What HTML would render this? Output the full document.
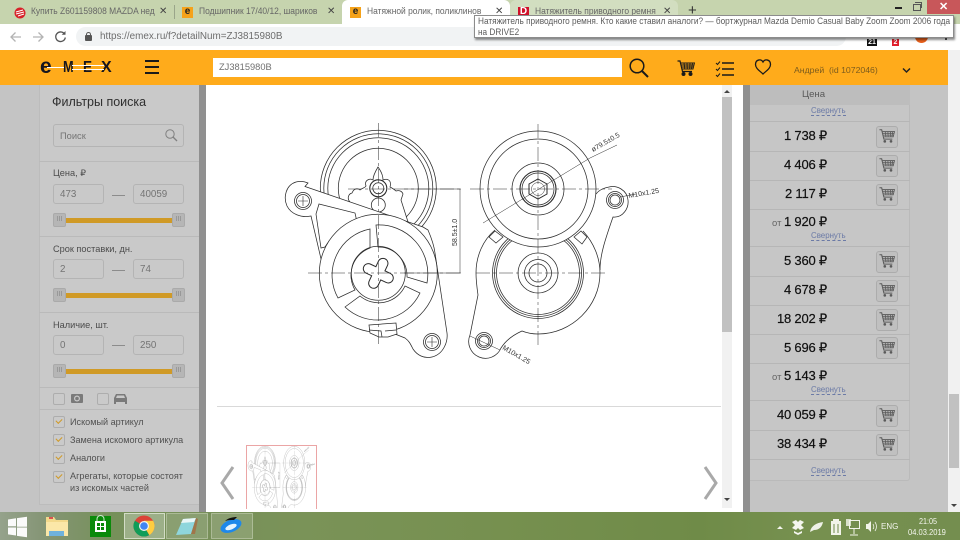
<!DOCTYPE html>
<html lang="ru"><head><meta charset="utf-8"><title>Натяжной ролик</title>
<style>
html,body{margin:0;padding:0;width:960px;height:540px;overflow:hidden;background:#c4c4c4}
#w{position:relative;width:960px;height:540px;overflow:hidden;font-family:"Liberation Sans",sans-serif;filter:blur(.25px)}
#w div,#w span.a{position:absolute}
.t{white-space:nowrap}
.tab{font-size:9.6px;color:#666;top:5px;width:141px;line-height:14px;white-space:nowrap;overflow:hidden;transform:scaleX(.88);transform-origin:left}
.x{font-size:10px;color:#444;top:5px;line-height:14px}
.fav{width:11px;height:11px;background:#f5a21a;top:7px;color:#222;font:bold 10px/10px "Liberation Sans",sans-serif;text-align:center}
.inp{border:1px solid #b4b4b4;border-radius:3px;box-sizing:border-box;background:#c9c9c9;color:#747474;font-size:9.8px;padding-left:6px}
.lab{font-size:9.2px;color:#4c4c4c;left:53px;white-space:nowrap;line-height:12px}
.dash{left:112px;width:13px;height:1px;background:#8c8c8c}
.h{width:13px;height:14px;background:#b6b6b6;border:1px solid #aaa;box-sizing:border-box;border-radius:2px;color:#8a8a8a;font-size:7px;line-height:11px;text-align:center}
.bar{left:66px;width:106px;height:5px;background:#d09a26}
.ln{left:39px;width:160px;height:1px;background:#bababa}
.rl{left:750px;width:160px;height:1px;background:#b6b6b6}
.cb{width:10px;height:10px;border:1px solid #adadad;border-radius:2px;background:#cacaca;left:53px}
.cb.c:after{content:"";position:absolute;left:2px;top:0;width:5px;height:3px;border-left:1.5px solid #d09a26;border-bottom:1.5px solid #d09a26;transform:rotate(-45deg) translate(-1px,1px)}
.cl{left:70px;font-size:9.1px;color:#515151;white-space:nowrap;line-height:12px}
.p{right:133px;font-size:13px;line-height:14px;color:#111;white-space:nowrap;letter-spacing:-.2px;-webkit-text-stroke:.2px #111}
.s{left:811px;font-size:7.9px;line-height:9px;color:#6b7aa6;border-bottom:1px dashed #6b7aa6;white-space:nowrap}
.btn{left:876px;width:22px;height:22px;border:1px solid #acacac;border-radius:3px;box-sizing:border-box;background:#c0c0c0}
.tray{color:#f4f6ee;white-space:nowrap}
.lg{font:bold 16px/16px "Liberation Sans",sans-serif;color:#15151f;z-index:4;top:60px;white-space:nowrap;transform-origin:left}
</style></head><body><div id="w">

<!-- chrome tab strip -->
<div style="left:0;top:0;width:960px;height:24px;background:#c6d4ae"></div>
<div style="left:510px;top:0;width:168px;height:24px;background:#d2dec0;border-radius:6px 6px 0 0"></div>
<div style="left:342px;top:0;width:168px;height:24px;background:#fff;border-radius:6px 6px 0 0"></div>
<div style="left:174px;top:5px;width:1px;height:14px;background:#9aa58a"></div>

<svg style="position:absolute;left:14px;top:7px" width="12" height="12" viewBox="0 0 12 12"><circle cx="6" cy="6" r="5.5" fill="#d7222a"/><path d="M2 5l7-2M2 7l8-2M4 9l6-2" stroke="#fff" fill="none"/></svg>
<div class="tab" style="left:31px">Купить Z601159808 MAZDA нед</div><div class="x" style="left:159px">✕</div>
<div class="fav" style="left:182px">e</div>
<div class="tab" style="left:199px">Подшипник 17/40/12, шариков</div><div class="x" style="left:327px">✕</div>
<div class="fav" style="left:350px">e</div>
<div class="tab" style="left:367px">Натяжной ролик, поликлинов</div><div class="x" style="left:495px">✕</div>
<div class="fav" style="left:518px;background:#d0102a;color:#fff">D</div>
<div class="tab" style="left:535px">Натяжитель приводного ремня</div><div class="x" style="left:663px">✕</div>
<div class="t" style="left:688px;top:1px;font-size:15px;line-height:20px;color:#333">+</div>

<!-- window controls -->
<div style="left:895px;top:7px;width:7px;height:2px;background:#222"></div>
<div style="left:913px;top:4px;width:6px;height:5px;border:1px solid #555"></div>
<div style="left:915px;top:2px;width:6px;height:5px;border:1px solid #555;border-left:0;border-bottom:0"></div>
<div style="left:927px;top:0;width:33px;height:14px;background:#c8575a"></div>
<div style="left:939px;top:0;font:bold 11px/14px 'Liberation Sans',sans-serif;color:#fff">✕</div>

<!-- address bar -->
<div style="left:0;top:24px;width:960px;height:26px;background:#fff"></div>
<div style="left:76px;top:27px;width:770px;height:19px;background:#f1f3f4;border-radius:10px"></div>
<svg style="position:absolute;left:8px;top:28px" width="62" height="18" viewBox="0 0 62 18" fill="none"><path d="M13 9H3M7.500 4.500L3 9l4.500 4.500" stroke="#b3b3b3" stroke-width="1.300"/><path d="M25 9h10M30.500 4.500L35 9l-4.500 4.500" stroke="#b3b3b3" stroke-width="1.300"/><path d="M56.500 6a4.800 4.800 0 1 0 .8 3.500" stroke="#555" stroke-width="1.300"/><path d="M57.500 3v3.800h-3.800" fill="#555"/></svg>
<div style="left:85px;top:35px;width:7px;height:6px;background:#555;border-radius:1px"></div>
<div style="left:86px;top:32px;width:3px;height:3px;border:1px solid #555;border-bottom:0;border-radius:3px 3px 0 0"></div>
<div class="t" style="left:100px;top:30px;font-size:9.900px;line-height:13px;color:#6d6d6d">https://emex.ru/f?detailNum=ZJ3815980B</div>
<div style="left:867px;top:39px;width:10px;height:7px;background:#111;color:#fff;font:bold 7px/7px 'Liberation Sans',sans-serif;text-align:center">21</div>
<div style="left:892px;top:39px;width:7px;height:7px;background:#e01f2c;color:#fff;font:bold 7px/7px 'Liberation Sans',sans-serif;text-align:center">2</div>
<div style="left:915px;top:30px;width:13px;height:13px;background:#e8601c;border-radius:50%"></div>
<div style="left:945px;top:38px;width:2px;height:2px;background:#555"></div>

<!-- main backdrop -->
<div style="left:0;top:85px;width:960px;height:427px;background:#c4c4c4"></div>

<!-- left filter panel -->
<div style="left:39px;top:85px;width:160px;height:420px;background:#c9c9c9;border-left:1px solid #bcbcbc;border-bottom:1px solid #bcbcbc;box-sizing:border-box"></div>
<div style="left:199px;top:85px;width:7px;height:427px;background:#909090"></div>
<div class="t" style="left:52px;top:94px;font-size:12.500px;line-height:16px;color:#2f2f2f">Фильтры поиска</div>
<div class="inp" style="left:53px;top:124px;width:131px;height:23px;line-height:22px;font-size:9.300px">Поиск</div>
<svg style="position:absolute;left:164px;top:128px" width="14" height="14" viewBox="0 0 14 14" fill="none" stroke="#808080"><circle cx="6" cy="6" r="4.200"/><path d="M9 9l4 4" stroke-width="1.300"/></svg>
<div class="ln" style="top:161px"></div>
<div class="lab" style="top:167px">Цена, ₽</div>
<div class="inp" style="left:53px;top:184px;width:51px;height:20px;line-height:19px">473</div>
<div class="dash" style="top:195px"></div>
<div class="inp" style="left:133px;top:184px;width:51px;height:20px;line-height:19px">40059</div>
<div class="bar" style="top:218px"></div>
<div class="h" style="left:53px;top:213px">III</div><div class="h" style="left:172px;top:213px">III</div>
<div class="ln" style="top:236px"></div>
<div class="lab" style="top:243px">Срок поставки, дн.</div>
<div class="inp" style="left:53px;top:259px;width:51px;height:20px;line-height:19px">2</div>
<div class="dash" style="top:270px"></div>
<div class="inp" style="left:133px;top:259px;width:51px;height:20px;line-height:19px">74</div>
<div class="bar" style="top:293px"></div>
<div class="h" style="left:53px;top:288px">III</div><div class="h" style="left:172px;top:288px">III</div>
<div class="ln" style="top:312px"></div>
<div class="lab" style="top:319px">Наличие, шт.</div>
<div class="inp" style="left:53px;top:335px;width:51px;height:20px;line-height:19px">0</div>
<div class="dash" style="top:345px"></div>
<div class="inp" style="left:133px;top:335px;width:51px;height:20px;line-height:19px">250</div>
<div class="bar" style="top:369px"></div>
<div class="h" style="left:53px;top:364px">III</div><div class="h" style="left:172px;top:364px">III</div>
<div class="ln" style="top:387px"></div>
<div class="cb" style="top:393px"></div>
<div class="cb" style="top:393px;left:97px"></div>
<svg style="position:absolute;left:70px;top:392px" width="60" height="14" viewBox="0 0 60 14"><rect x="1" y="2" width="12" height="9" rx="1" fill="#7a7a7a"/><circle cx="7" cy="6.500" r="3" fill="#c9c9c9"/><circle cx="7" cy="6.500" r="1.800" fill="#7a7a7a"/><path d="M44 6l2-4h9l2 4v6h-2v-2h-9v2h-2z" fill="#7a7a7a"/><path d="M46 6l1-2.500h7l1 2.500z" fill="#c9c9c9"/></svg>
<div class="ln" style="top:409px"></div>
<div class="cb c" style="top:416px"></div><div class="cl" style="top:416px">Искомый артикул</div>
<div class="cb c" style="top:434px"></div><div class="cl" style="top:434px">Замена искомого артикула</div>
<div class="cb c" style="top:452px"></div><div class="cl" style="top:452px">Аналоги</div>
<div class="cb c" style="top:471px"></div><div class="cl" style="top:471px;line-height:11.500px">Агрегаты, которые состоят<br>из искомых частей</div>

<!-- modal -->
<div style="left:206px;top:85px;width:537px;height:427px;background:#fff"></div>
<div style="left:722px;top:85px;width:10px;height:423px;background:#f1f1f1"></div>
<div style="left:722px;top:97px;width:10px;height:235px;background:#c1c1c1"></div>
<div style="left:217px;top:406px;width:504px;height:1px;background:#d9d9d9"></div>
<div style="left:246px;top:445px;width:69px;height:63px;border:1px solid #eba5a5;border-bottom:0;background:#fff;z-index:0"></div>
<div style="left:743px;top:85px;width:7px;height:427px;background:#909090"></div>

<!-- right panel -->
<div style="left:750px;top:85px;width:160px;height:396px;background:#c6c6c6;border-right:1px solid #bababa;border-bottom:1px solid #bababa;box-sizing:border-box;border-radius:0 0 3px 0"></div>
<div style="left:750px;top:85px;width:160px;height:20px;background:#bdbdbd"></div>
<div class="t" style="left:802px;top:89px;font-size:9.600px;line-height:12px;color:#5a5a5a">Цена</div>
<div class="s" style="top:106px">Свернуть</div>
<div class="rl" style="top:121px"></div>
<div class="p" style="top:129px">1 738 ₽</div>
<div class="rl" style="top:151px"></div>
<div class="p" style="top:158px">4 406 ₽</div>
<div class="rl" style="top:180px"></div>
<div class="p" style="top:187px">2 117 ₽</div>
<div class="rl" style="top:209px"></div>
<div class="t" style="left:772px;top:218px;font-size:9.500px;line-height:11px;color:#666">от</div>
<div class="p" style="top:215px">1 920 ₽</div>
<div class="s" style="top:231px">Свернуть</div>
<div class="rl" style="top:246px"></div>
<div class="p" style="top:254px">5 360 ₽</div>
<div class="rl" style="top:276px"></div>
<div class="p" style="top:283px">4 678 ₽</div>
<div class="rl" style="top:305px"></div>
<div class="p" style="top:312px">18 202 ₽</div>
<div class="rl" style="top:334px"></div>
<div class="p" style="top:341px">5 696 ₽</div>
<div class="rl" style="top:363px"></div>
<div class="t" style="left:772px;top:372px;font-size:9.500px;line-height:11px;color:#666">от</div>
<div class="p" style="top:369px">5 143 ₽</div>
<div class="s" style="top:385px">Свернуть</div>
<div class="rl" style="top:400px"></div>
<div class="p" style="top:408px">40 059 ₽</div>
<div class="rl" style="top:430px"></div>
<div class="p" style="top:437px">38 434 ₽</div>
<div class="rl" style="top:459px"></div>
<div class="s" style="top:466px">Свернуть</div>
<div class="btn" style="top:126px"></div><div class="btn" style="top:155px"></div><div class="btn" style="top:184px"></div>
<div class="btn" style="top:251px"></div><div class="btn" style="top:280px"></div><div class="btn" style="top:309px"></div><div class="btn" style="top:337px"></div>
<div class="btn" style="top:405px"></div><div class="btn" style="top:434px"></div>

<!-- page scrollbar -->
<div style="left:948px;top:85px;width:12px;height:427px;background:#f1f1f1"></div>
<div style="left:949px;top:394px;width:10px;height:74px;background:#c1c1c1"></div>

<!-- drawing and vector overlay -->
<svg style="position:absolute;left:0;top:0;z-index:1" width="960" height="540" viewBox="0 0 960 540">
<defs>
<clipPath id="thumb"><rect x="247" y="446" width="68" height="62"/></clipPath>
<symbol id="cart" viewBox="0 0 18 18" overflow="visible"><path d="M.5 2H3l2.500 10.500h9.500" fill="none" stroke="currentColor" stroke-width="1.200"/><path d="M4 4h13.500l-1.500 6H5.500M7 4l.8 6M10 4l.3 6M13 4l-.3 6M15.500 4l-1 6M4.500 6h12.500M5 8h11.500" fill="none" stroke="currentColor" stroke-width=".9"/><circle cx="6.500" cy="15" r="1.500" fill="currentColor"/><circle cx="13.500" cy="15" r="1.500" fill="currentColor"/></symbol>
<g id="art" fill="none" stroke="#2b2b2b" stroke-width=".75">
 <!-- left view: pulley -->
 <circle cx="378.300" cy="188.300" r="58"/><circle cx="378.300" cy="188.300" r="54.500"/><circle cx="378.300" cy="188.300" r="50.500"/><circle cx="378.300" cy="188.300" r="40"/>
 <path d="M350 202c-3-3-2-8 2-9 2-5 6-5 8-3 2-2 5-2 6-4-2-6 4-8 7-6 0-4 2-8 5-13 3 4 5 9 5 13 4-2 9 0 7 7 2 1 4 2 6 4 3-1 6 0 7 3l-2 6 8 25" fill="#fff"/>
 <circle cx="378.300" cy="188.300" r="8.500" stroke-width="1.100"/><circle cx="378.300" cy="188.300" r="5.500"/>
 <circle cx="378.300" cy="205" r="7"/>
 <!-- left view: bracket -->
 <path d="M305 186.500L423 227l5 3c3 7 6 15 7 23l12 80c1 8-3 21-15 24-8 2-15-2-19-8-3-6-4-8-8-11l-15-6h-12l-24-14-19-27-10-15-14-60c-10 2-20-2-24-10-4-9-1-21 9-24 4-1 7-1 12 1z" fill="#fff"/>
 <circle cx="303" cy="201" r="8.500"/><circle cx="303" cy="201" r="6.500"/><path d="M298 201h10M303 196v10" stroke-width=".6"/>
 <circle cx="432" cy="342" r="8.500"/><circle cx="432" cy="342" r="6.500"/><path d="M427 342h10M432 337v10" stroke-width=".6"/>
 <path d="M319 204l36 9 2 9c-15 5-26 15-32 25l-4 1-5-34z"/>
 <circle cx="378.300" cy="273.300" r="59" fill="#fff"/>
 <path d="M376 225A49 49 0 0 1 427 283L407 277A29 29 0 0 0 378 247Z"/>
 <path d="M370 229A47 47 0 0 0 338 298L355 290A29 29 0 0 1 370 248Z"/>
 <path d="M345 307L360 296A29 29 0 0 0 405 286L420 293A47 47 0 0 1 345 307Z"/>
 <circle cx="378.300" cy="273.300" r="27"/>
 <path transform="translate(378.300 273.300) rotate(25)" stroke-width="1" d="M-5-11a5 5 0 0 1 10 0L5-5 11-5a5 5 0 0 1 0 10L5 5 5 11a5 5 0 0 1-10 0L-5 5-11 5a5 5 0 0 1 0-10L-5-5Z"/>
 <path d="M369 325l27-2 1 11-9 3h-9l-9-4zM369 330l12 1 1 6M385 331l11-1" fill="#fff"/>
 <path d="M378.300 123V345M348 189H463M308 273H462" stroke-width=".5" stroke-dasharray="14 3 3 3"/>
 <path d="M404 189H461M404 273H461M460 189V273" stroke-width=".5"/>
 <!-- right view: body -->
 <path d="M495 230C483 240 476 256 476 273 476 280 477 288 478 295L470 335A16 16 0 0 0 501 348C506 340 513 335 522 331 527 333 532 334 538 334 572 334 600 306 600 273 600 258 594 243 583 231"/>
 <path d="M600 270C600 255 605 240 613 217C623 218 629 208 628 200 627 190 617 185 609 187 603 188 599 190 596 194"/>
 <circle cx="484" cy="341" r="8.500"/><circle cx="484" cy="341" r="6.500"/><circle cx="484" cy="341" r="5"/>
 <circle cx="615" cy="200" r="8.500"/><circle cx="615" cy="200" r="6.500"/><circle cx="615" cy="200" r="5"/>
 <circle cx="538" cy="273" r="45.500"/><circle cx="538" cy="273" r="43.500"/><circle cx="538" cy="273" r="41.500"/>
 <circle cx="538" cy="273" r="20"/><circle cx="538" cy="273" r="13.500"/><circle cx="538" cy="273" r="9"/>
 <path d="M489 237l6-6 8 6-7 6zM587 237l-6-6-7 6 8 7z" fill="#fff"/>
 <circle cx="538" cy="189" r="58" fill="#fff"/><circle cx="538" cy="189" r="50"/>
 <circle cx="538" cy="189" r="26"/><circle cx="538" cy="189" r="18" stroke-width="1.100"/><circle cx="538" cy="189" r="16"/>
 <path d="M538 179l9 5v10l-9 5-9-5v-10z" stroke-width="1"/><circle cx="538" cy="189" r="6.500" stroke-width=".5"/>
 <path d="M483 223L590 158l27-13" stroke-width=".5"/>
 <path d="M538 124V345M470 189H612M476 273H608" stroke-width=".5" stroke-dasharray="14 3 3 3"/>
 <path d="M620 197l16-3M470 336l30 14" stroke-width=".5"/>
 <g fill="#333" stroke="none" font-family="Liberation Sans,sans-serif" font-size="7">
  <text transform="translate(457 246) rotate(-90)">58.5±1.0</text>
  <text transform="translate(593 152) rotate(-30)">ø79.5±0.5</text>
  <text transform="translate(629 198) rotate(-10)">M10x1.25</text>
  <text transform="translate(502 349) rotate(30)">M10x1.25</text>
 </g>
</g>
</defs>
<use href="#art"/>
<g clip-path="url(#thumb)"><g opacity=".75" transform="matrix(.183 0 0 .29 195.800 408.200)"><use href="#art"/></g></g>
<path d="M233 467L222 483L233 499" fill="none" stroke="#a9a9a9" stroke-width="3"/>
<path d="M705 467L716 483L705 499" fill="none" stroke="#a9a9a9" stroke-width="3"/>
<path d="M724 93l3-3 3 3zM724 498l3 3 3-3zM951 58l3-3 3 3zM951 504l3 3 3-3z" fill="#444"/>
<g color="#5a5a5a">
<use href="#cart" x="879" y="128" width="16" height="16"/><use href="#cart" x="879" y="157" width="16" height="16"/><use href="#cart" x="879" y="186" width="16" height="16"/>
<use href="#cart" x="879" y="253" width="16" height="16"/><use href="#cart" x="879" y="282" width="16" height="16"/><use href="#cart" x="879" y="311" width="16" height="16"/><use href="#cart" x="879" y="339" width="16" height="16"/>
<use href="#cart" x="879" y="407" width="16" height="16"/><use href="#cart" x="879" y="436" width="16" height="16"/>
</g>
</svg>

<!-- orange header -->
<div style="left:0;top:50px;width:948px;height:35px;background:#ffab1b;z-index:2"></div>
<div style="left:948px;top:50px;width:12px;height:35px;background:#f1f1f1;z-index:2"></div>
<div class="t" style="left:40px;top:57px;z-index:4;font:bold 21px/20px 'Liberation Sans',sans-serif;color:#15151f">e</div>
<div class="lg" style="left:62.500px;transform:scaleX(.8)">M</div>
<div class="lg" style="left:82.500px;transform:scaleX(.85)">E</div>
<div class="lg" style="left:101px">X</div>
<div style="left:47px;top:66.500px;width:17px;height:1.300px;background:#fff;z-index:5"></div>
<div style="left:72px;top:64.500px;width:22px;height:1.200px;background:#fff;z-index:5"></div><div style="left:72px;top:68.500px;width:22px;height:1.200px;background:#fff;z-index:5"></div>
<div style="left:90px;top:64.500px;width:14px;height:1.200px;background:#fff;z-index:5"></div><div style="left:90px;top:68.500px;width:14px;height:1.200px;background:#fff;z-index:5"></div>
<div style="left:145px;top:60px;width:14px;height:2px;background:#1a1a1a;z-index:3"></div>
<div style="left:145px;top:66px;width:14px;height:2px;background:#1a1a1a;z-index:3"></div>
<div style="left:145px;top:72px;width:14px;height:2px;background:#1a1a1a;z-index:3"></div>
<div style="left:213px;top:58px;width:409px;height:19px;background:#fff;z-index:3"></div>
<div class="t" style="left:219px;top:61px;font-size:9.300px;line-height:13px;color:#707070;z-index:4">ZJ3815980B</div>
<svg style="position:absolute;left:625px;top:54px;z-index:4" width="150" height="28" viewBox="625 54 150 28" fill="none" stroke="#1a1a1a">
<circle cx="637" cy="66" r="6.800" stroke-width="1.500"/><path d="M642 71l6 6" stroke-width="2"/>
<g color="#1a1a1a"><use href="#cart" x="677" y="59" width="18" height="18"/></g>
<path d="M716 63l1.500 1.500 2.500-3M716 69l1.500 1.500 2.500-3M716 75l1.500 1.500 2.500-3" stroke-width="1"/><path d="M722 63h12M722 69h12M722 75h12" stroke-width="1.500"/>
<path d="M763 74c-3-3-7.500-5.500-7.500-9.500 0-5 5.500-6 7.500-2.500 2-3.500 7.500-2.500 7.500 2.500 0 4-4.500 6.500-7.500 9.500z" stroke-width="1.300"/>
</svg>
<div class="t" style="left:794px;top:64px;font-size:8.700px;line-height:12px;color:#7c5c1e;z-index:4;white-space:pre">Андрей  (id 1072046)</div>
<svg style="position:absolute;left:902px;top:67px;z-index:4" width="9" height="7" viewBox="0 0 9 7" fill="none" stroke="#222" stroke-width="1.500"><path d="M1 1.500l3.500 3.500L8 1.500"/></svg>

<!-- tooltip -->
<div style="left:474px;top:15px;width:480px;height:23px;box-sizing:border-box;background:#fff;border:1px solid #8c8c8c;box-shadow:1px 2px 2px rgba(0,0,0,.45);z-index:6"></div>
<div class="t" style="left:478px;top:16px;font-size:9.300px;line-height:10.500px;color:#5b5b5b;z-index:7;transform:scaleX(.886);transform-origin:left">Натяжитель приводного ремня. Кто какие ставил аналоги? — бортжурнал Mazda Demio Casual Baby Zoom Zoom 2006 года<br>на DRIVE2</div>

<!-- taskbar -->
<div style="left:0;top:512px;width:960px;height:28px;z-index:2;background:radial-gradient(ellipse 10px 6px at 775px 530px,rgba(225,230,215,.6),transparent),radial-gradient(ellipse 14px 7px at 825px 535px,rgba(225,230,215,.65),transparent),radial-gradient(ellipse 10px 7px at 738px 520px,rgba(225,230,215,.55),transparent),radial-gradient(ellipse 10px 7px at 838px 517px,rgba(225,230,215,.55),transparent),radial-gradient(ellipse 40px 10px at 360px 520px,rgba(185,185,120,.45),transparent),linear-gradient(90deg,#95a28b 0,#869677 40px,#76905a 110px,#78905a 230px,#7a9358 300px,#76904f 500px,#6f8b48 700px,#76904f 800px,#748e4f 960px)"></div>
<svg style="position:absolute;left:0;top:512px;z-index:3" width="960" height="28" viewBox="0 512 960 28">
<path d="M8 519.500l8-1.200v8h-8zM17 518.100l10-1.400v10h-10zM8 527.500h8v8l-8-1.100zM17 527.500h10v9.800l-10-1.400z" fill="#fafafa"/>
<path d="M46 517h8l2 3h12v16h-22z" fill="#f3d98b"/><path d="M46 522h22v14h-22z" fill="#fbe7a8"/><path d="M49 531h15v5h-15z" fill="#6fb2dc"/><path d="M49 517h4v2h-4z" fill="#d9534f"/>
<rect x="90" y="516" width="21" height="21" fill="#0a8a0a"/><path d="M95 521h11v11h-11z" fill="#fff"/><path d="M97 523h3v3h-3zM101 523h3v3h-3zM97 527h3v3h-3zM101 527h3v3h-3z" fill="#0a8a0a"/><path d="M97 521v-2a3.500 3.500 0 0 1 7 0v2" fill="none" stroke="#cfe8cf"/>
<rect x="124.500" y="513.500" width="40" height="25" fill="rgba(255,255,255,.28)" stroke="rgba(235,240,225,.75)"/>
<rect x="166.500" y="513.500" width="41" height="25" fill="rgba(255,255,255,.14)" stroke="rgba(235,240,225,.4)"/>
<rect x="211.500" y="513.500" width="41" height="25" fill="rgba(255,255,255,.14)" stroke="rgba(235,240,225,.4)"/>
<circle cx="144" cy="526" r="10.500" fill="#db4437"/>
<path d="M144 526L134.900 531.300A10.500 10.500 0 0 0 149.300 535.100Z" fill="#0f9d58"/>
<path d="M144 526L149.300 535.100A10.500 10.500 0 0 0 153.100 520.700L144 520.700Z" fill="#ffcd40"/>
<path d="M144 526L134.900 531.300A10.500 10.500 0 0 1 134.900 520.700Z" fill="#0f9d58"/>
<circle cx="144" cy="526" r="5" fill="#f1f1f1"/><circle cx="144" cy="526" r="3.800" fill="#4285f4"/>
<path d="M176 535l7-16 13-1-5 16z" fill="#8fd6dc"/><path d="M183 519l13-1-2 4-13 1z" fill="#e9f6f6"/><path d="M191 534l5-16 2 1-3 15z" fill="#a0764a"/>
<ellipse cx="231" cy="526" rx="11" ry="6" transform="rotate(-22 231 526)" fill="#1e88ea"/><ellipse cx="231" cy="527" rx="6" ry="2.500" transform="rotate(-22 231 527)" fill="#e6f4ff"/><path d="M225 521c3-3 8-4 12-4l-3 3c-3 0-6 0-9 1z" fill="#111"/>
<path d="M777 529l3-3 3 3z" fill="#f4f6ee"/>
<path d="M792 522l4-2 2 2 2-2 4 2-3 3 3 3-4 2-2-2-2 2-4-2 3-3zM794 531l4 2 4-2v2l-4 2-4-2z" fill="#f4f6ee"/>
<path d="M810 532c1-6 6-9 13-10-1 5-4 8-9 8l-4 2z" fill="#eef1e6"/>
<path d="M831 521h10v14h-10z" fill="#f2f4ea"/><path d="M834 524v9M838 524v9" stroke="#6f8a4a"/><path d="M833 519h6v2h-6z" fill="#f2f4ea"/>
<rect x="849.500" y="520.500" width="10" height="8" fill="none" stroke="#f2f4ea"/><path d="M854 529v5M850 535h8" stroke="#f2f4ea"/><path d="M846 519h5v7h-5z" fill="#f2f4ea" opacity=".8"/>
<path d="M866 524h2l3-3v11l-3-3h-2z" fill="#f2f4ea"/><path d="M873 524c1 2 1 4 0 5M875 522c2 3 2 6 0 9" fill="none" stroke="#f2f4ea" stroke-width=".8"/>
</svg>
<div class="t tray" style="left:881px;top:521px;font-size:8px;line-height:11px;z-index:4">ENG</div>
<div class="t tray" style="left:919px;top:515px;font-size:8.500px;line-height:12px;z-index:4;transform:scaleX(.85);transform-origin:left">21:05</div>
<div class="t tray" style="left:908px;top:526px;font-size:8.500px;line-height:12px;z-index:4;transform:scaleX(.89);transform-origin:left">04.03.2019</div>
</div></body></html>
